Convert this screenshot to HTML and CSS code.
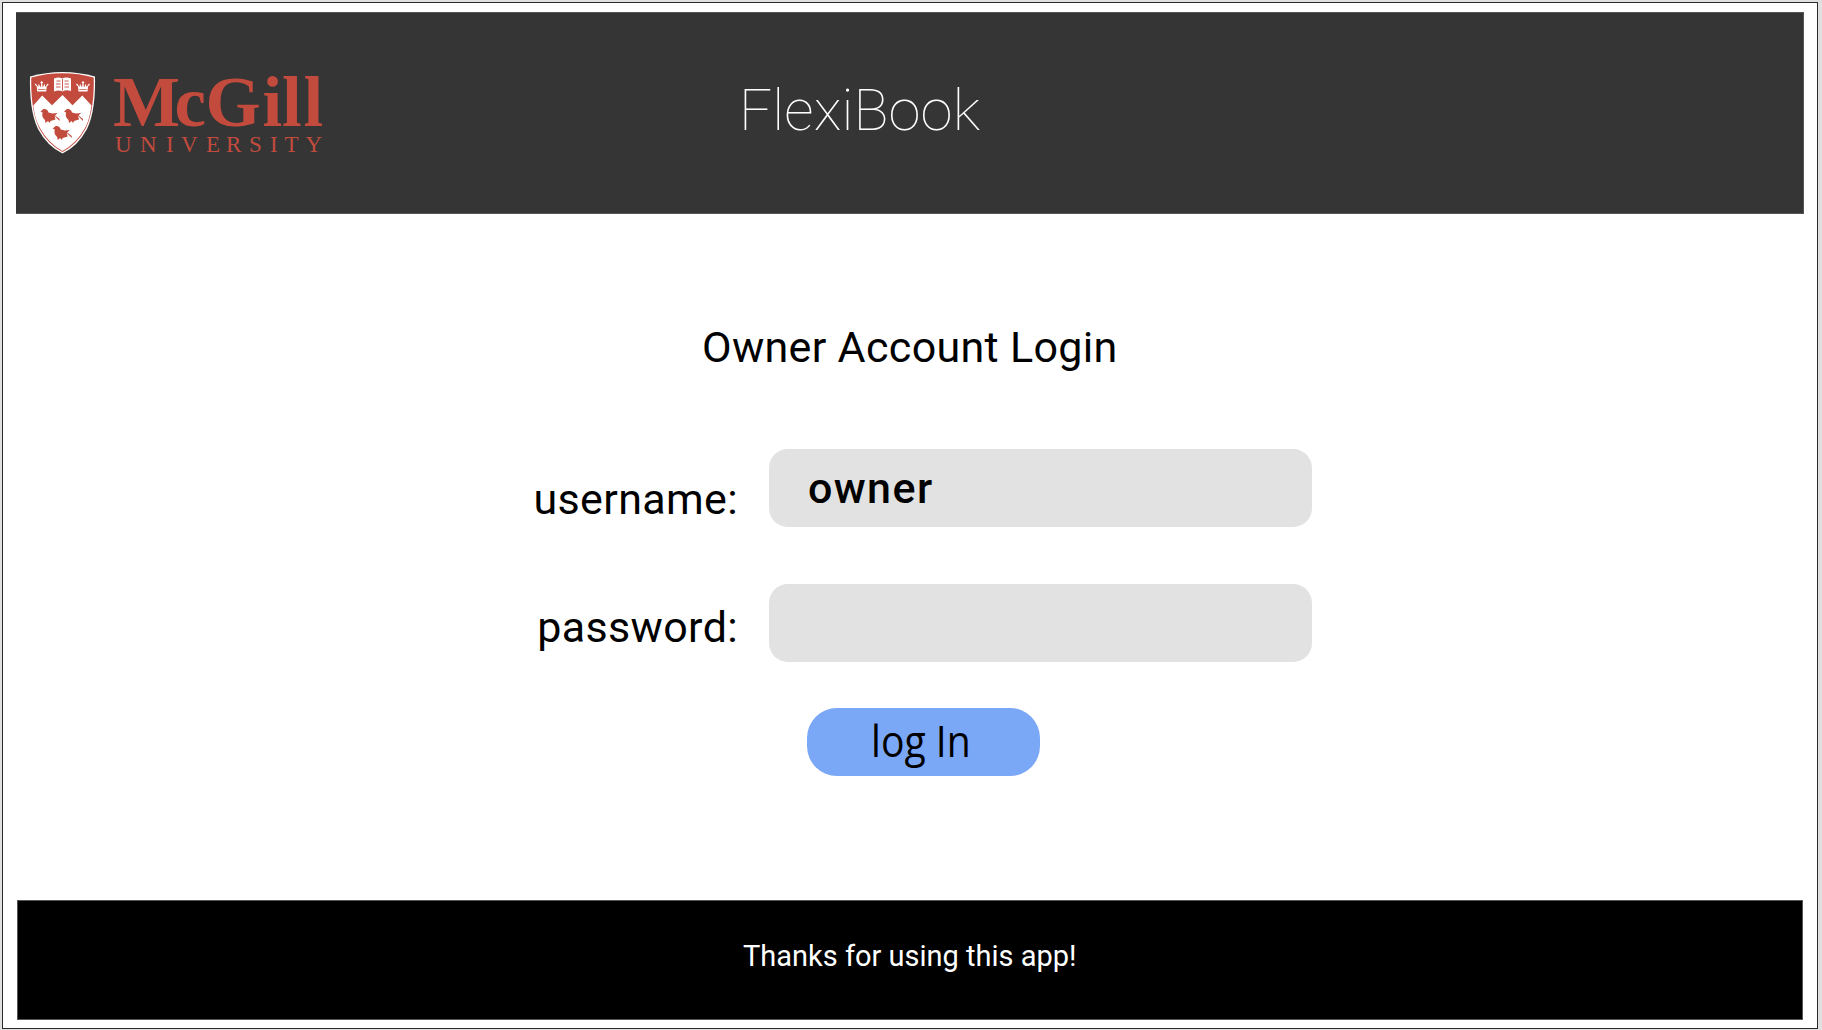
FILE: index.html
```html
<!DOCTYPE html>
<html lang="en">
<head>
<meta charset="utf-8">
<title>FlexiBook</title>
<link rel="stylesheet" href="styles.css">
</head>
<body>
<div class="frame">
  <header class="header">
    <svg class="logo" viewBox="28 68 300 90" role="img" aria-label="McGill University">
      <path fill="#fff" d="M30 76.500Q46 72 62.500 72T95 76.500C95.500 96 93.500 116 87 129Q78 146 62.500 153.500Q47 146 38 129C31.500 116 29.500 96 30 76.500Z"/>
      <path fill="#c24b3e" d="M31.300 77.600Q46 73.200 62.500 73.200T93.700 77.600C94.200 96 92.200 115 86 128Q77.500 144 62.500 152Q47.500 144 39 128C32.800 115 30.800 96 31.300 77.600Z"/>
      <path fill="#fff" d="M33.300 105.500L42.200 95.500L52 105.200L62.500 95L72.500 105.200L82.300 95.500L91.500 105.500C90 115 88.500 122 85 128Q77 143 62.500 151Q48 143 40 128C36.500 122 34.500 115 33.300 105.500Z"/>
      <path fill="#fff" d="M54 78.500Q59 76.500 62 78.500Q66 76.500 71 78.500V91Q66 89.500 62.500 91.500Q59 89.500 54 91.500Z"/>
      <path stroke="#c24b3e" stroke-width=".9" fill="none" d="M62.500 79V90.500M56.500 81H60.500M56 84H60.500M56 87H60.500M64.500 81H68.500M64.500 84H69M64.500 87H69"/>
      <defs>
        <path id="crown" d="M-4.500 4.500L-5-.5L-7-2.500L-6-3.500L-3.500 0L-3-3.500L-1 .5L-.5-3.500L-1.500-4.500L0-6L1.500-4.500L.5-3.500L1 .5L3-3.500L3.500 0L6-3.500L7-2.500L5-.5L4.500 4.500Z"/>
        <path id="bird" d="M-10-4.500L-7-7Q-3-7.500-2-3.500L2-2.500L7-3L4.500-.5L6.500 1L9 3V5L4-.2L5 3.500L0 5L-1 7L-2.500 5L-5 7L-5.500 4Q-9 1.500-8-3.500Z"/>
      </defs>
      <g fill="#fff"><use href="#crown" x="41.700" y="87"/><use href="#crown" x="83" y="87"/></g>
      <path stroke="#c24b3e" stroke-width=".7" d="M38 89.500H45.500M79.300 89.500H86.800"/>
      <g fill="#c24b3e"><use href="#bird" x="50.500" y="116"/><use href="#bird" x="74" y="116"/><use href="#bird" x="62.700" y="133"/></g>
      <text class="logo-name" x="113 174.500 205.500 262.500 282 303.500" y="125.500">McGill</text>
      <text class="logo-sub" x="115 140 166 181 206 226 249 270 284.500 305.500" y="151.500">UNIVERSITY</text>
    </svg>
    <h1 class="brand">FlexiBook</h1>
  </header>
  <main class="main">
    <h2 class="title">Owner Account Login</h2>
    <form class="form">
      <div class="row">
        <label class="label" for="username">username:</label>
        <input class="field" id="username" type="text" value="owner">
      </div>
      <div class="row row-password">
        <label class="label" for="password">password:</label>
        <input class="field" id="password" type="password">
      </div>
      <button class="login" type="button"><span class="login-text">log In</span></button>
    </form>
  </main>
  <footer class="footer"><span class="thanks">Thanks for using this app!</span></footer>
</div>
</body>
</html>
```
FILE: styles.css
```css
* { box-sizing: border-box; }
body {
  margin: 0;
  height: 1030px;
  padding: 2px 4px 1px 2px;
  background: #e0e0e0;
  font-family: Roboto, sans-serif;
  color: #000;
  overflow: hidden;
}
.frame {
  height: 1027px;
  padding: 9px 13px 8px 13px;
  border: 1px solid #2b2b2b;
  background: #fff;
  display: flex;
  flex-direction: column;
}
.header {
  height: 202px;
  flex: none;
  display: flex;
  align-items: flex-start;
  background: #353535;
  border: 1px solid #555;
  border-left: 0;
}
.logo {
  width: 300px;
  height: 90px;
  margin: 55px 0 0 11.500px;
  flex: none;
  overflow: visible;
}
.logo-name {
  font: bold 71px "Liberation Serif", serif;
  fill: #c24b3e;
}
.logo-sub {
  font: 23px "Liberation Serif", serif;
  fill: #c24b3e;
}
.brand {
  margin: 63px 0 0 411.500px;
  font-size: 58px;
  font-weight: 100;
  line-height: 68px;
  letter-spacing: .1px;
  color: #fff;
  white-space: nowrap;
}
.main { flex: 1; }
.title {
  margin: 108px 0 0;
  padding-left: 686px;
  font-size: 43px;
  font-weight: 400;
  line-height: 50px;
  letter-spacing: .32px;
  white-space: nowrap;
}
.form { margin-top: 77px; }
.row { display: flex; height: 78px; }
.row-password { margin-top: 57px; }
.label {
  width: 722px;
  margin-top: 25px;
  font-size: 43px;
  line-height: 50px;
  letter-spacing: .35px;
  text-align: right;
}
.row-password .label { margin-top: 18px; }
.field {
  width: 543px;
  height: 78px;
  margin-left: 31px;
  padding: 0 39px;
  border: 0;
  border-radius: 19px;
  background: #e2e2e2;
  font: 500 43px Roboto, sans-serif;
  letter-spacing: 1.4px;
  color: #000;
}
.login {
  display: block;
  width: 233px;
  height: 68px;
  margin: 46px 0 0 791px;
  padding: 0 0 2px 64px;
  border: 0;
  border-radius: 30px;
  background: #7ba7f7;
  text-align: left;
  font: 43px/60px "Open Sans", sans-serif;
  color: #000;
}
.login-text {
  display: inline-block;
  transform: scaleX(.91);
  transform-origin: left;
}
.footer {
  height: 120px;
  flex: none;
  margin: 0 1px;
  padding: 38px 0 0 725px;
  background: #000;
  border: 1px solid #555;
  font-size: 29px;
  line-height: 34px;
  color: #fff;
  white-space: nowrap;
}
```
